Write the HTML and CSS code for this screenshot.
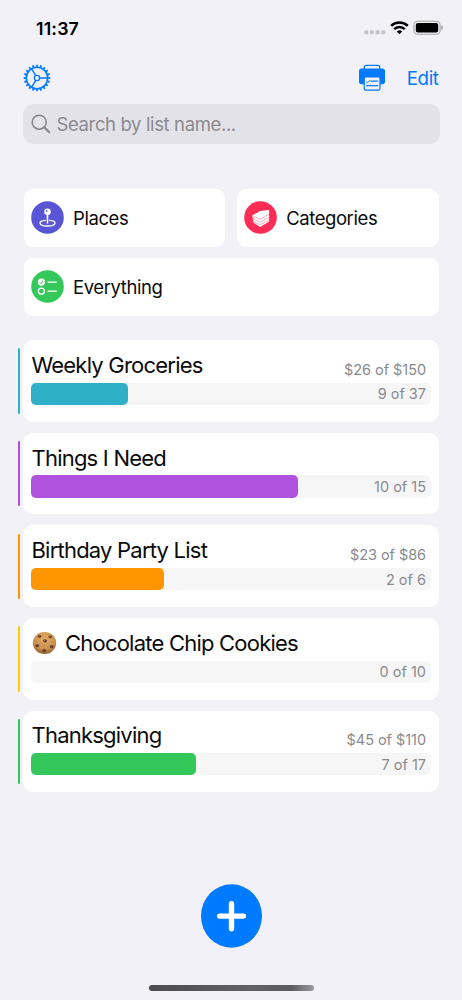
FILE: index.html
```html
<!DOCTYPE html>
<html lang="en">
<head>
    <meta charset="UTF-8">
    <meta name="viewport" content="width=device-width, initial-scale=1.0">
    <title>Lists</title>
    <link rel="stylesheet" href="styles.css">
</head>
<body>
    <div class="status-bar">
        <span class="time">11:37</span>
        <svg class="status-icons" width="80" height="16" viewBox="0 0 80 16">
            <g fill="#c4c4c9">
                <rect x="1.2" y="10.2" width="4" height="4" rx="1"/>
                <rect x="6.9" y="10.2" width="4" height="4" rx="1"/>
                <rect x="12.6" y="10.2" width="4" height="4" rx="1"/>
                <rect x="18.2" y="10.2" width="4" height="4" rx="1"/>
            </g>
            <g fill="none" stroke="#000" stroke-width="2.5">
                <path d="M28.2 5.9a12 12 0 0 1 16.6 0"/>
                <path d="M31.2 9.2a7.6 7.6 0 0 1 10.6 0"/>
            </g>
            <path d="M36.5 14.2l-2.7-2.8a4 4 0 0 1 5.4 0z"/>
            <rect x="50.9" y="1.2" width="26.2" height="13" rx="3.8" fill="none" stroke="#a5a5a8" stroke-width="1.1"/>
            <rect x="52.8" y="3" width="22.4" height="9.5" rx="2"/>
            <path d="M78.2 5.3q1.8.5 1.8 2.4t-1.8 2.4z" fill="#a5a5a8"/>
        </svg>
    </div>

    <div class="toolbar">
        <svg class="gear" width="28" height="28" viewBox="0 0 28 28" fill="none" stroke="#007aff">
            <circle cx="14" cy="14" r="12.2" stroke-width="2.2" pathLength="200" stroke-dasharray="4.6 5.4" stroke-dashoffset="2.3"/>
            <circle cx="14" cy="14" r="10.7" stroke-width="1.6"/>
            <circle cx="14" cy="14" r="2.6" stroke-width="1.3"/>
            <path d="M16.6 14h8.3M12.7 11.7L8.5 4.6M12.7 16.3l-4.2 7.1" stroke-width="1.4"/>
        </svg>
        <div class="toolbar-right">
            <svg width="28" height="28" viewBox="0 0 28 28">
                <path d="M6.2 5V3.4a2 2 0 0 1 2-2h11.6a2 2 0 0 1 2 2V5" fill="none" stroke="#007aff" stroke-width="1.3"/>
                <rect x="1" y="4.4" width="26" height="15.8" rx="2.6" fill="#007aff"/>
                <rect x="6.2" y="13" width="15.8" height="13.2" rx="1.6" fill="#f2f1f7" stroke="#007aff" stroke-width="1.2"/>
                <path d="M8.4 18l.9.7 2.6-2.4" fill="none" stroke="#007aff" stroke-width=".8" stroke-linecap="round"/>
                <path d="M13 17.2h6.8M8.6 21.6h11.2" fill="none" stroke="#007aff" stroke-width="1.2" stroke-linecap="round"/>
            </svg>
            <span class="edit">Edit</span>
        </div>
    </div>

    <div class="search">
        <svg width="20" height="20" viewBox="0 0 20 20" fill="none" stroke="#85858b" stroke-linecap="round">
            <circle cx="8.2" cy="8.2" r="7" stroke-width="1.6"/>
            <path d="M13.3 13.3l5 5" stroke-width="2"/>
        </svg>
        <span>Search by list name...</span>
    </div>

    <div class="tiles">
        <div class="tile">
            <svg class="tile-icon" viewBox="0 0 33 33">
                <circle cx="16.5" cy="16.5" r="16.3" fill="#5856d6"/>
                <path d="M14.3 19.4c-3.1.3-5.3 1.3-5.3 2.6 0 1.7 3.2 3 7.5 3s7.5-1.3 7.5-3c0-1.3-2.2-2.3-5.3-2.6" fill="none" stroke="#fff" stroke-width="1.4" stroke-linecap="round"/>
                <path d="M16.5 12v10" stroke="#fff" stroke-width="1.6" stroke-linecap="round"/>
                <circle cx="16.5" cy="10.8" r="3.3" fill="#fff"/>
                <circle cx="15.6" cy="9.9" r=".9" fill="#5856d6"/>
            </svg>
            <span>Places</span>
        </div>
        <div class="tile">
            <svg class="tile-icon" viewBox="0 0 33 33">
                <circle cx="16.5" cy="16.5" r="16.3" fill="#ff2d55"/>
                <path d="M8.4 14.3l7.8-4.2 8.1-1q.8 0 .8.8v10.7l-8.9 5.3-7.8-4.8 1.5-1-1.5-1.4 1.4-1.1-1.4-1.1z" fill="#fff"/>
                <path d="M8.8 15l7.4 3.2 8.9-5M8.8 17.8l7.4 3.4 8.9-5M8.8 20.3l7.4 3.5 8.9-5" fill="none" stroke="#ff6d88" stroke-width=".6"/>
            </svg>
            <span>Categories</span>
        </div>
        <div class="tile tile-wide">
            <svg class="tile-icon" viewBox="0 0 33 33">
                <circle cx="16.5" cy="16.5" r="16.3" fill="#34c759"/>
                <circle cx="10.4" cy="12.1" r="3.6" fill="#fff"/>
                <path d="M8.8 12.3l1.2 1.3 2-3" fill="none" stroke="#34c759" stroke-width="1"/>
                <circle cx="10.4" cy="21.2" r="3" fill="none" stroke="#fff" stroke-width="1.3"/>
                <path d="M17 12.1h8.4M17 21.2h8.4" stroke="#fff" stroke-width="1.3" stroke-linecap="round"/>
            </svg>
            <span>Everything</span>
        </div>
    </div>

    <div class="lists">
        <div class="list teal">
            <div class="stripe"></div>
            <div class="card">
                <div class="card-head"><span class="name">Weekly Groceries</span><span class="price">$26 of $150</span></div>
                <div class="bar"><div class="fill" style="width: 24.3%"></div><span class="count">9 of 37</span></div>
            </div>
        </div>
        <div class="list purple">
            <div class="stripe"></div>
            <div class="card">
                <div class="card-head"><span class="name">Things I Need</span></div>
                <div class="bar"><div class="fill" style="width: 66.7%"></div><span class="count">10 of 15</span></div>
            </div>
        </div>
        <div class="list orange">
            <div class="stripe"></div>
            <div class="card">
                <div class="card-head"><span class="name">Birthday Party List</span><span class="price">$23 of $86</span></div>
                <div class="bar"><div class="fill" style="width: 33.3%"></div><span class="count">2 of 6</span></div>
            </div>
        </div>
        <div class="list yellow">
            <div class="stripe"></div>
            <div class="card">
                <div class="card-head">
                    <svg class="cookie" width="26" height="24" viewBox="0 0 26 24">
                        <defs>
                            <radialGradient id="dough" cx=".5" cy=".3" r=".7">
                                <stop offset="0" stop-color="#e0ab65"/>
                                <stop offset=".7" stop-color="#c98f4d"/>
                                <stop offset="1" stop-color="#91592b"/>
                            </radialGradient>
                        </defs>
                        <ellipse cx="13.5" cy="12" rx="11.7" ry="11" fill="url(#dough)"/>
                        <g fill="#64392a">
                            <ellipse cx="8.6" cy="5.4" rx="1.7" ry="1.4"/>
                            <ellipse cx="19.2" cy="5.8" rx="1.8" ry="1.4"/>
                            <ellipse cx="14" cy="9.8" rx="1.9" ry="1.6"/>
                            <ellipse cx="6.2" cy="14.6" rx="1.9" ry="1.7"/>
                            <ellipse cx="20.7" cy="15.6" rx="1.9" ry="1.6"/>
                            <ellipse cx="13.2" cy="19.5" rx="2" ry="1.6"/>
                        </g>
                        <g fill="#a8714e">
                            <circle cx="8.3" cy="5" r=".6"/>
                            <circle cx="18.8" cy="5.3" r=".6"/>
                            <circle cx="13.6" cy="9.3" r=".7"/>
                            <circle cx="5.9" cy="14.1" r=".6"/>
                            <circle cx="20.3" cy="15.1" r=".6"/>
                            <circle cx="12.8" cy="19" r=".6"/>
                        </g>
                    </svg>
                    <span class="name">Chocolate Chip Cookies</span>
                </div>
                <div class="bar"><span class="count">0 of 10</span></div>
            </div>
        </div>
        <div class="list green">
            <div class="stripe"></div>
            <div class="card">
                <div class="card-head"><span class="name">Thanksgiving</span><span class="price">$45 of $110</span></div>
                <div class="bar"><div class="fill" style="width: 41.2%"></div><span class="count">7 of 17</span></div>
            </div>
        </div>
    </div>

    <div class="footer">
        <svg class="add" width="61" height="64" viewBox="0 0 61 64">
            <ellipse cx="30.5" cy="32" rx="30.5" ry="31.7" fill="#007aff"/>
            <path d="M30.5 19.6v25.2M18.6 32.1h23.8" stroke="#fff" stroke-width="5.4" stroke-linecap="round"/>
        </svg>
        <div class="home-indicator"></div>
    </div>
</body>
</html>
```
FILE: styles.css
```css
* {
    box-sizing: border-box;
}

body {
    margin: 0;
    height: 1000px;
    display: flex;
    flex-direction: column;
    overflow: hidden;
    background-color: #f2f1f7;
    color: #0a0a0a;
    font-family: Inter, "Liberation Sans", sans-serif;
}

svg {
    display: block;
    flex: none;
}

.status-bar {
    display: flex;
    justify-content: space-between;
    align-items: center;
    height: 56px;
    padding: 0 19px 0 36px;
}

.time {
    font-size: 17.8px;
    font-weight: 600;
    letter-spacing: 0.15px;
    color: #000;
}

.toolbar {
    display: flex;
    justify-content: space-between;
    align-items: center;
    height: 48px;
    padding: 0 23.5px 4px;
}

.gear {
    margin-left: -0.3px;
}

.toolbar-right {
    display: flex;
    align-items: center;
    gap: 21px;
}

.edit {
    font-size: 18.7px;
    letter-spacing: -0.4px;
    color: #007aff;
}

.search {
    display: flex;
    align-items: center;
    gap: 6px;
    height: 40px;
    margin: 0 22.5px;
    padding: 0 8px;
    border-radius: 11px;
    background-color: #e3e2e8;
    font-size: 18.5px;
    letter-spacing: -0.37px;
    color: #8a8a90;
}

.tiles {
    display: grid;
    grid-template-columns: 1fr 1fr;
    gap: 11.3px;
    margin: 44.7px 23.5px 0;
}

.tile {
    display: flex;
    align-items: center;
    gap: 9px;
    height: 58px;
    padding: 0 7.5px;
    border-radius: 9px;
    background-color: #fff;
    font-size: 18.5px;
    letter-spacing: -0.42px;
}

.tile-wide {
    grid-column: span 2;
}

.tile-icon {
    width: 33px;
    height: 33px;
}

.lists {
    display: flex;
    flex-direction: column;
    gap: 11px;
    margin: 24.3px 23.5px 0 18px;
}

.list {
    display: flex;
    align-items: center;
    gap: 3.2px;
    height: 81.6px;
}

.stripe {
    width: 2.3px;
    height: 65.5px;
    border-radius: 2px;
    background-color: var(--color);
}

.card {
    flex: 1;
    height: 100%;
    padding: 0 8px;
    border-radius: 10px;
    background-color: #fff;
}

.card-head {
    display: flex;
    align-items: center;
    height: 42.5px;
    padding-top: 7px;
}

.name {
    font-size: 22px;
    letter-spacing: -0.78px;
    white-space: nowrap;
}

.cookie {
    margin-right: 7.5px;
}

.price {
    margin: 9px 4.5px 0 auto;
    font-size: 14.5px;
    letter-spacing: -0.05px;
    color: #8a8a8e;
}

.bar {
    display: flex;
    align-items: center;
    justify-content: space-between;
    height: 22.3px;
    border-radius: 5px;
    background-color: #f6f6f6;
}

.fill {
    height: 100%;
    border-radius: 5px;
    background-color: var(--color);
}

.count {
    margin: 0 4.5px 0 auto;
    font-size: 14.5px;
    color: #8a8a8e;
}

.teal {
    --color: #30b0c7;
}

.purple {
    --color: #af52de;
}

.orange {
    --color: #ff9500;
}

.yellow {
    --color: #ffcc00;
}

.green {
    --color: #34c759;
}

.footer {
    display: flex;
    flex-direction: column;
    align-items: center;
    justify-content: space-between;
    height: 107.5px;
    margin-top: auto;
    margin-bottom: 9px;
}

.home-indicator {
    width: 165px;
    height: 6px;
    border-radius: 3px;
    background: linear-gradient(to right, #4c4b4f, #626165 60%, #5b5a5e 86%, #9a999e);
}
```
